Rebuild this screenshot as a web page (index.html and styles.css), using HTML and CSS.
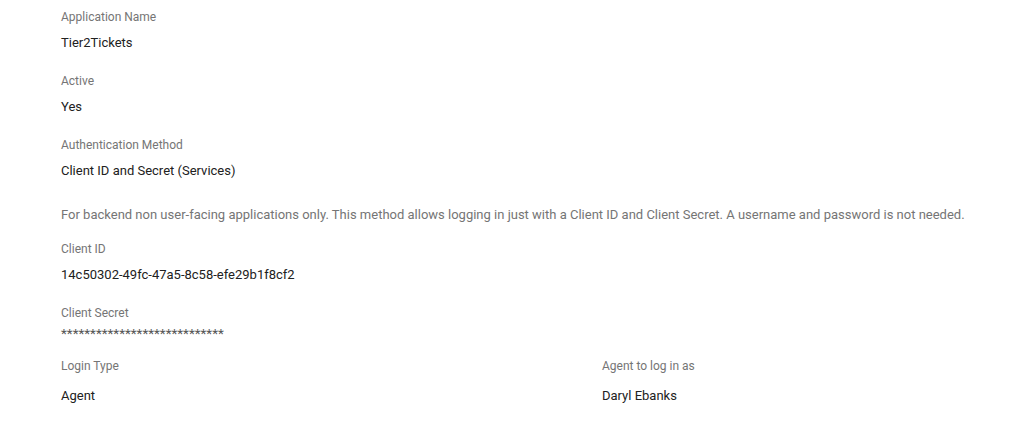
FILE: index.html
```html
<!DOCTYPE html>
<html>
<head>
<meta charset="utf-8">
<link rel="stylesheet" href="styles.css">
</head>
<body>
<div class="page">
  <div class="field">
    <div class="label">Application Name</div>
    <div class="value">Tier2Tickets</div>
  </div>
  <div class="field">
    <div class="label">Active</div>
    <div class="value">Yes</div>
  </div>
  <div class="field field-auth">
    <div class="label">Authentication Method</div>
    <div class="value">Client ID and Secret (Services)</div>
  </div>
  <div class="desc">For backend non user-facing applications only. This method allows logging in just with a Client ID and Client Secret. A username and password is not needed.</div>
  <div class="field">
    <div class="label">Client ID</div>
    <div class="value">14c50302-49fc-47a5-8c58-efe29b1f8cf2</div>
  </div>
  <div class="field field-secret">
    <div class="label">Client Secret</div>
    <div class="value secret">****************************</div>
  </div>
  <div class="row">
    <div class="field field-login">
      <div class="label">Login Type</div>
      <div class="value">Agent</div>
    </div>
    <div class="field field-login">
      <div class="label">Agent to log in as</div>
      <div class="value">Daryl Ebanks</div>
    </div>
  </div>
</div>
</body>
</html>
```

FILE: styles.css
```css
html, body {
  margin: 0;
  padding: 0;
  background: #ffffff;
}
body {
  font-family: Roboto, "Liberation Sans", Arial, sans-serif;
  color: #212121;
}
.page {
  padding: 8px 0 0 61px;
  width: 961px;
}
.field {
  display: flex;
  flex-direction: column;
  gap: 8px;
  margin-bottom: 19px;
}
.label {
  font-size: 12px;
  line-height: 16px;
  padding-top: 1px;
  color: #757575;
}
.value {
  font-size: 13px;
  line-height: 20px;
  color: #212121;
}
.field-auth {
  margin-bottom: 24px;
}
.desc {
  font-size: 13px;
  line-height: 20px;
  color: #757575;
  margin-bottom: 15px;
}
.field-secret {
  gap: 3px;
  margin-bottom: 15px;
}
.secret {
  font-size: 13.5px;
  line-height: 18px;
  color: #555555;
}
.row {
  display: grid;
  grid-template-columns: 541px 1fr;
}
.field-login {
  gap: 12px;
}
```
